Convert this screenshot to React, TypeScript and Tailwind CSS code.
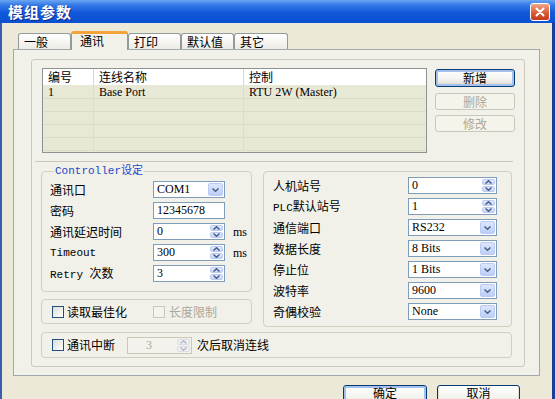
import React from "react";

const SERIF = "font-['Liberation_Serif','Noto_Sans_CJK_SC',serif]";
const MONO = "font-['Liberation_Mono','Noto_Sans_CJK_SC',monospace]";
const CJK = "font-['Noto_Sans_CJK_SC',sans-serif]";

function Chev({ up, gray }: { up?: boolean; gray?: boolean }) {
  return (
    <svg width="7" height="4" viewBox="0 0 7 4">
      <path
        d={up ? "M0.5 3.5L3.5 0.7L6.5 3.5" : "M0.5 0.5L3.5 3.3L6.5 0.5"}
        fill="none"
        stroke={gray ? "#B8BCC8" : "#4D6185"}
        strokeWidth="1.5"
      />
    </svg>
  );
}

function Combo({ value, cls }: { value: string; cls: string }) {
  return (
    <div className={`flex h-[17px] border border-[#7F9DB9] bg-white ${cls}`}>
      <span className={`flex-1 pl-[3px] text-[12px] leading-[15px] ${SERIF}`}>{value}</span>
      <div className="m-[1px] w-[15px] rounded-[2px] border border-[#B9CBF3] bg-[linear-gradient(180deg,#DDE7FC,#BCCEF8)] flex items-center justify-center">
        <Chev />
      </div>
    </div>
  );
}

function Input({ value, cls }: { value: string; cls: string }) {
  return (
    <div className={`flex h-[17px] border border-[#7F9DB9] bg-white ${cls}`}>
      <span className={`flex-1 pl-[3px] text-[12px] leading-[15px] ${SERIF}`}>{value}</span>
    </div>
  );
}

function Spin({ value, cls, disabled }: { value: string; cls: string; disabled?: boolean }) {
  return (
    <div
      className={`flex h-[17px] border ${
        disabled ? "border-[#C9C7BA] bg-[#F3F2EC]" : "border-[#7F9DB9] bg-white"
      } ${cls}`}
    >
      <span
        className={`flex-1 text-[12px] leading-[15px] ${SERIF} ${
          disabled ? "pl-[18px] text-[#ACA899]" : "pl-[3px]"
        }`}
      >
        {value}
      </span>
      <div className="w-[15px] flex flex-col gap-[1px] p-[1px]">
        <div
          className={`flex-1 rounded-[2px] border flex items-center justify-center ${
            disabled ? "border-[#DCDCE4] bg-[#F0F0F4]" : "border-[#B9CBF3] bg-[linear-gradient(180deg,#E4ECFD,#C3D3F8)]"
          }`}
        >
          <Chev up gray={disabled} />
        </div>
        <div
          className={`flex-1 rounded-[2px] border flex items-center justify-center ${
            disabled ? "border-[#DCDCE4] bg-[#F0F0F4]" : "border-[#B9CBF3] bg-[linear-gradient(180deg,#E4ECFD,#C3D3F8)]"
          }`}
        >
          <Chev gray={disabled} />
        </div>
      </div>
    </div>
  );
}

function Check({ disabled }: { disabled?: boolean }) {
  return (
    <div
      className={`w-[12px] h-[12px] shrink-0 border ${
        disabled ? "border-[#CAC8BB] bg-[#F5F4EA]" : "border-[#1C5180] bg-[linear-gradient(135deg,#DCDCD7,#FFFFFF)]"
      }`}
    />
  );
}

function Btn({
  label,
  cls,
  def,
  disabled,
}: {
  label: string;
  cls: string;
  def?: boolean;
  disabled?: boolean;
}) {
  if (disabled) {
    return (
      <div
        className={`flex justify-center rounded-[3px] border border-[#C9C7BA] bg-[#F5F4EA] text-[#ACA899] text-[12px] ${CJK} ${cls}`}
      >
        {label}
      </div>
    );
  }
  return (
    <div
      className={`flex justify-center rounded-[3px] border border-[#003C74] bg-[linear-gradient(180deg,#FFFFFF,#F4F4F0_55%,#DCD7CB)] text-[12px] ${CJK} ${
        def ? "shadow-[inset_0_0_0_2px_#A6C0EE]" : "shadow-[inset_0_-1px_0_1px_#E0DCD0]"
      } ${cls}`}
    >
      {label}
    </div>
  );
}

function Tab({ label, sel, cls }: { label: string; sel?: boolean; cls: string }) {
  if (sel) {
    return (
      <div
        className={`h-[19px] border-x border-[#919B9C] rounded-t-[3px] bg-[#F1F0E9] border-t-[3px] border-t-[#F2A33A] pl-[8px] text-[12px] leading-[14px] ${CJK} ${cls}`}
      >
        {label}
      </div>
    );
  }
  return (
    <div
      className={`h-[16px] mb-[1px] border border-b-0 border-[#919B9C] rounded-t-[3px] bg-[linear-gradient(180deg,#FFFFFF,#ECEBE5)] pl-[5px] text-[12px] leading-[15px] ${CJK} ${cls}`}
    >
      {label}
    </div>
  );
}

function Row({ label, children }: { label: React.ReactNode; children: React.ReactNode }) {
  return (
    <div className="flex items-center h-[17px]">
      {label}
      {children}
    </div>
  );
}

export default function App() {
  const emptyRows = [0, 1, 2, 3];
  return (
    <div className={`w-[555px] h-[399px] overflow-hidden flex flex-col bg-[#ECE9D8] text-[12px] text-black ${CJK}`}>
      {/* title bar */}
      <div className="h-[23px] shrink-0 flex items-center pl-[8px] pr-[5px] bg-[linear-gradient(180deg,#6AA6F2_0%,#3478E6_22%,#1159DA_55%,#0B50D0_100%)]">
        <span className="text-white font-bold text-[15px] leading-[18px] tracking-[1px] [text-shadow:1px_1px_0_#0B2B8C]">
          模组参数
        </span>
        <div className="ml-auto w-[20px] h-[18px] rounded-[3px] border border-white bg-[linear-gradient(180deg,#F0A68C,#D8582F_60%,#C23A1D)] flex items-center justify-center">
          <svg width="10" height="10" viewBox="0 0 10 10">
            <path d="M1.5 1.5L8.5 8.5M8.5 1.5L1.5 8.5" stroke="white" strokeWidth="2" strokeLinecap="round" />
          </svg>
        </div>
      </div>

      {/* body */}
      <div className="flex-1 flex flex-col border-l-[2px] border-l-[#3A5FB2] border-r-[3px] border-r-[#1B3C9A]">
        {/* tabs */}
        <div className="mt-[8px] ml-[16px] h-[19px] flex items-end relative z-10">
          <Tab label="一般" cls="w-[53px]" />
          <Tab label="通讯" sel cls="w-[57px]" />
          <Tab label="打印" cls="w-[53px]" />
          <Tab label="默认值" cls="w-[53px]" />
          <Tab label="其它" cls="w-[54px]" />
        </div>

        {/* tab panel */}
        <div className="-mt-[1px] ml-[11px] w-[527px] h-[327px] border border-[#A3A9AA] bg-[#F1F0E9]">
          <div className="mt-[9px] ml-[17px] w-[494px] h-[308px] border border-[#CCCABC] rounded-[3px]">
            {/* list + buttons */}
            <div className="mt-[8px] ml-[10px] flex">
              <div className="w-[385px] h-[85px] border border-[#8F9293] bg-[#E8E8D6] flex flex-col overflow-hidden">
                <div className="h-[16px] bg-white flex text-[12px] leading-[16px] shrink-0">
                  <div className="w-[51px] pl-[5px] border-r border-[#D8D8D0]">编号</div>
                  <div className="w-[150px] pl-[5px] border-r border-[#D8D8D0]">连线名称</div>
                  <div className="flex-1 pl-[5px]">控制</div>
                </div>
                <div className={`h-[14px] shrink-0 flex text-[12px] leading-[14px] border-b border-[#DBDCC9] ${SERIF}`}>
                  <div className="w-[51px] pl-[5px] border-r border-[#DCDCCB]">1</div>
                  <div className="w-[150px] pl-[5px] border-r border-[#DCDCCB]">Base Port</div>
                  <div className="flex-1 pl-[5px]">RTU 2W (Master)</div>
                </div>
                {emptyRows.map((i) => (
                  <div key={i} className="h-[13px] shrink-0 flex border-b border-[#DBDCC9]">
                    <div className="w-[51px] border-r border-[#DCDCCB]" />
                    <div className="w-[150px] border-r border-[#DCDCCB]" />
                    <div className="flex-1" />
                  </div>
                ))}
              </div>
              <div className="ml-[8px] w-[80px] flex flex-col">
                <Btn label="新增" def cls="mt-[1px] h-[18px] items-center leading-[14px]" />
                <Btn label="删除" disabled cls="mt-[6px] h-[17px] items-center leading-[14px]" />
                <Btn label="修改" disabled cls="mt-[5px] h-[17px] items-center leading-[14px]" />
              </div>
            </div>

            {/* separator */}
            <div className="mt-[8px] ml-[3px] w-[478px] h-[1px] bg-[#C9C7B9]" />

            {/* groups */}
            <div className="mt-[9px] ml-[9px] flex">
              <div className="flex flex-col">
                {/* Controller group */}
                <div className="relative w-[211px] h-[121px] border border-[#D0D0BF] rounded-[4px]">
                  <span
                    className={`absolute left-[12px] -top-[8px] px-[1px] bg-[#F1F0E9] text-[11px] leading-[14px] text-[#1A49C6] ${MONO}`}
                  >
                    Controller设定
                  </span>
                  <div className="pt-[9px] pl-[8px] flex flex-col gap-[4px]">
                    <Row label={<span className="w-[103px] leading-[14px]">通讯口</span>}>
                      <Combo value="COM1" cls="w-[72px]" />
                    </Row>
                    <Row label={<span className="w-[103px] leading-[14px]">密码</span>}>
                      <Input value="12345678" cls="w-[72px]" />
                    </Row>
                    <Row label={<span className="w-[103px] leading-[14px]">通讯延迟时间</span>}>
                      <Spin value="0" cls="w-[72px]" />
                      <span className={`ml-[8px] text-[12px] ${SERIF}`}>ms</span>
                    </Row>
                    <Row label={<span className={`w-[103px] text-[11px] leading-[14px] ${MONO}`}>Timeout</span>}>
                      <Spin value="300" cls="w-[72px]" />
                      <span className={`ml-[8px] text-[12px] ${SERIF}`}>ms</span>
                    </Row>
                    <Row
                      label={
                        <span className="w-[103px] leading-[14px]">
                          <span className={`text-[11px] ${MONO}`}>Retry </span>次数
                        </span>
                      }
                    >
                      <Spin value="3" cls="w-[72px]" />
                    </Row>
                  </div>
                </div>
                {/* 读取最佳化 */}
                <div className="mt-[7px] w-[211px] h-[25px] border border-[#D0D0BF] rounded-[4px] flex items-center pl-[10px]">
                  <div className="w-[101px] flex items-center">
                    <Check />
                    <span className="ml-[3px] leading-[14px]">读取最佳化</span>
                  </div>
                  <Check disabled />
                  <span className="ml-[4px] leading-[14px] text-[#ACA899]">长度限制</span>
                </div>
              </div>

              {/* right group */}
              <div className="ml-[11px] w-[249px] h-[156px] border border-[#D0D0BF] rounded-[4px] pt-[5px] pl-[9px] flex flex-col gap-[4px]">
                <Row label={<span className="w-[135px] leading-[14px]">人机站号</span>}>
                  <Spin value="0" cls="w-[89px]" />
                </Row>
                <Row
                  label={
                    <span className="w-[135px] leading-[14px]">
                      <span className={`text-[11px] ${MONO}`}>PLC</span>默认站号
                    </span>
                  }
                >
                  <Spin value="1" cls="w-[89px]" />
                </Row>
                <Row label={<span className="w-[135px] leading-[14px]">通信端口</span>}>
                  <Combo value="RS232" cls="w-[89px]" />
                </Row>
                <Row label={<span className="w-[135px] leading-[14px]">数据长度</span>}>
                  <Combo value="8 Bits" cls="w-[89px]" />
                </Row>
                <Row label={<span className="w-[135px] leading-[14px]">停止位</span>}>
                  <Combo value="1 Bits" cls="w-[89px]" />
                </Row>
                <Row label={<span className="w-[135px] leading-[14px]">波特率</span>}>
                  <Combo value="9600" cls="w-[89px]" />
                </Row>
                <Row label={<span className="w-[135px] leading-[14px]">奇偶校验</span>}>
                  <Combo value="None" cls="w-[89px]" />
                </Row>
              </div>
            </div>

            {/* 通讯中断 */}
            <div className="mt-[5px] ml-[9px] w-[471px] h-[26px] border border-[#D0D0BF] rounded-[4px] flex items-center pl-[10px]">
              <div className="w-[75px] flex items-center">
                <Check />
                <span className="ml-[3px] leading-[14px]">通讯中断</span>
              </div>
              <Spin value="3" disabled cls="w-[65px]" />
              <span className="ml-[5px] leading-[14px]">次后取消连线</span>
            </div>
          </div>
        </div>

        {/* bottom buttons */}
        <div className="mt-[9px] flex justify-end pr-[32px] gap-[10px]">
          <Btn label="确定" def cls="w-[84px] h-[22px] items-start pt-[1px] leading-[12px]" />
          <Btn label="取消" cls="w-[83px] h-[22px] items-start pt-[1px] leading-[12px]" />
        </div>
      </div>
    </div>
  );
}
